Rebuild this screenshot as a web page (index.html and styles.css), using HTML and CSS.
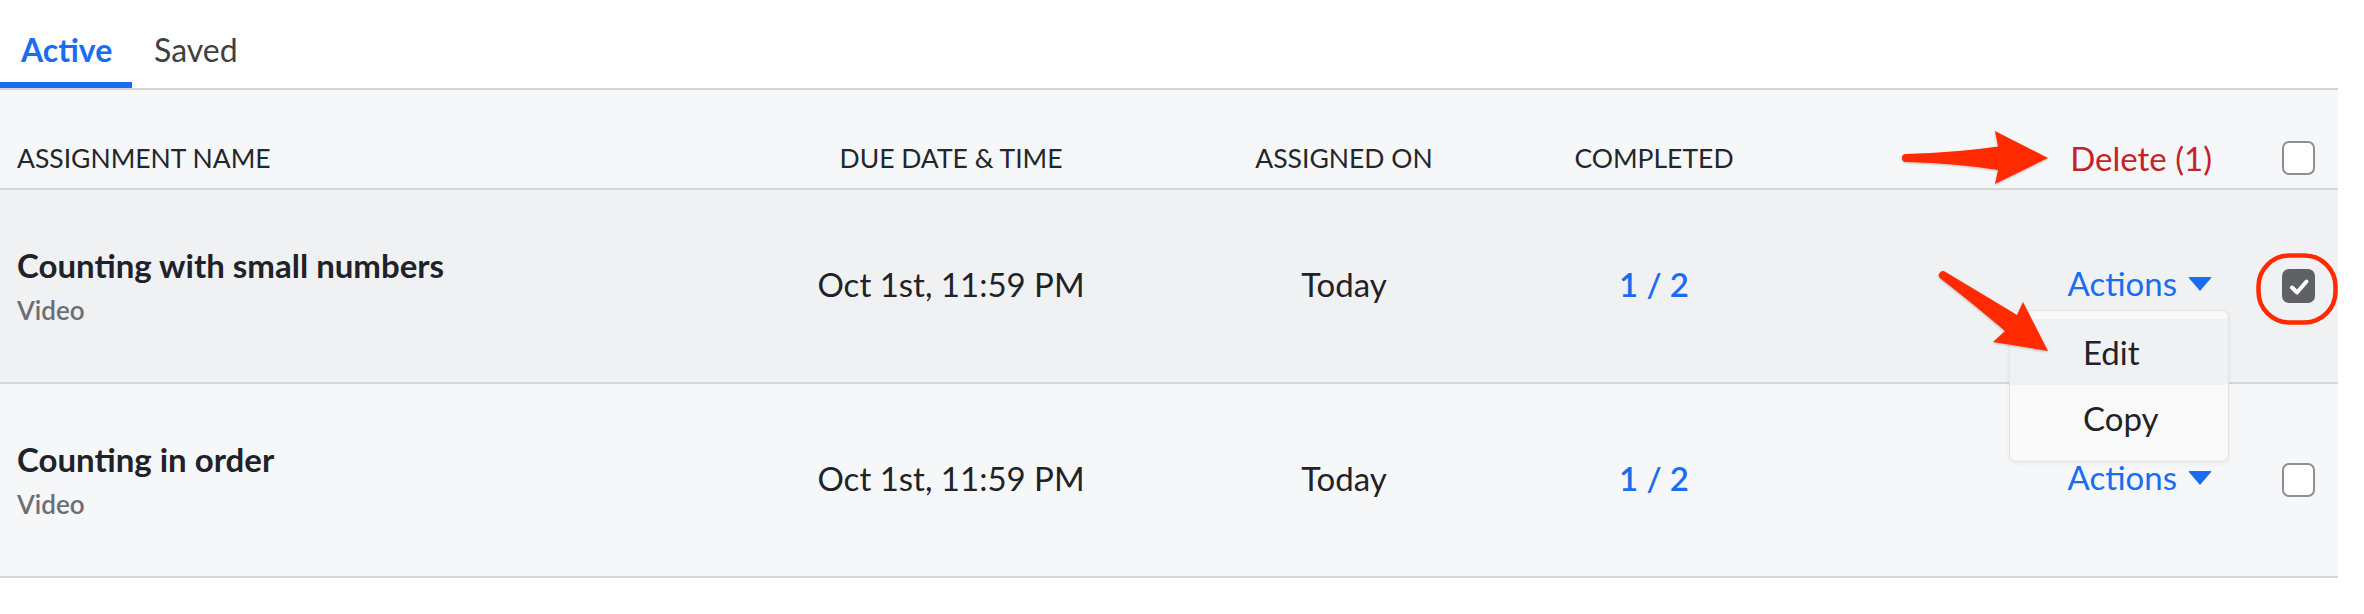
FILE: index.html
```html
<!DOCTYPE html>
<html lang="en">
<head>
<meta charset="utf-8">
<title>Assignments</title>
<link rel="stylesheet" href="styles.css">
</head>
<body>
<div class="page">
  <nav class="tabs">
    <a class="tab tab-active">Active</a>
    <a class="tab">Saved</a>
  </nav>

  <div class="table">
    <div class="row head">
      <div class="cell name">ASSIGNMENT NAME</div>
      <div class="cell mid">DUE DATE &amp; TIME</div>
      <div class="cell mid">ASSIGNED ON</div>
      <div class="cell mid">COMPLETED</div>
      <div class="cell act"><span class="delete">Delete (1)</span></div>
      <div class="cell chk"><span class="box"></span></div>
    </div>

    <div class="row item selected">
      <div class="cell name">
        <div class="title">Counting with small numbers</div>
        <div class="type">Video</div>
      </div>
      <div class="cell mid data">Oct 1st, 11:59 PM</div>
      <div class="cell mid data">Today</div>
      <div class="cell mid data done">1 / 2</div>
      <div class="cell act">
        <span class="actions">Actions <span class="caret"></span>
          <div class="menu">
            <div class="menu-item hover">Edit</div>
            <div class="menu-item">Copy</div>
          </div>
        </span>
      </div>
      <div class="cell chk"><span class="box checked"><svg viewBox="0 0 33 34" width="33" height="34"><path d="M10 18.5 L15 23.5 L24.5 12.5" fill="none" stroke="#fff" stroke-width="4" stroke-linecap="round" stroke-linejoin="round"/></svg></span></div>
    </div>

    <div class="row item">
      <div class="cell name">
        <div class="title">Counting in order</div>
        <div class="type">Video</div>
      </div>
      <div class="cell mid data">Oct 1st, 11:59 PM</div>
      <div class="cell mid data">Today</div>
      <div class="cell mid data done">1 / 2</div>
      <div class="cell act"><span class="actions">Actions <span class="caret"></span></span></div>
      <div class="cell chk"><span class="box"></span></div>
    </div>
  </div>
</div>

<svg class="annot" width="2364" height="614" viewBox="0 0 2364 614">
  <defs>
    <filter id="sh" x="-10%" y="-10%" width="120%" height="130%">
      <feDropShadow dx="0" dy="1" stdDeviation="1" flood-color="#000" flood-opacity="0.25"/>
    </filter>
  </defs>
  <path filter="url(#sh)" fill="#ff2a00" d="M1906,154 Q1958,152.5 1998,146.5 L1995,131 L2048,158 L1995,184 L1998,170 Q1958,163.5 1906,162 A4,4 0 0 1 1906,154 Z"/>
  <path filter="url(#sh)" fill="#ff2a00" d="M1945.5,272 Q1984,295 2017,315 L2023,302 L2048,351 L1993,342 L2005,331 Q1972,303 1940.5,278.5 A4,4 0 0 1 1945.5,272 Z"/>
  <rect x="2258.5" y="255.5" width="77" height="67" rx="31" ry="31" fill="none" stroke="#ff2a00" stroke-width="4.5"/>
</svg>
</body>
</html>
```
FILE: styles.css
```css
html, body {
  margin: 0;
  padding: 0;
  background: #ffffff;
}
body {
  position: relative;
  width: 2364px;
  height: 614px;
  overflow: hidden;
  font-family: Lato, "Open Sans", sans-serif;
  color: #1f2329;
}
.page {
  width: 2338px;
}
.tabs {
  display: flex;
  border-bottom: 2px solid #d6d7da;
  height: 88px;
  box-sizing: content-box;
}
.tab {
  display: block;
  box-sizing: border-box;
  height: 88px;
  padding: 31px 23px 0 22px;
  font-size: 32px;
  line-height: 38px;
  color: #3d3f42;
  border-bottom: 6px solid transparent;
}
.tab-active {
  padding-left: 21px;
  width: 132px;
  font-weight: 700;
  color: #1a6cf0;
  border-bottom-color: #1a6cf0;
}
.row {
  display: grid;
  grid-template-columns: 751px 400px 386px 234px 487px 80px;
  align-items: center;
  box-sizing: border-box;
  border-bottom: 2px solid #d6d7da;
}
.head {
  height: 100px;
  padding-top: 38px;
  background: #f6f7f9;
  font-size: 26.5px;
  line-height: 34px;
  color: #23262b;
}
.item {
  height: 194px;
  background: #f6f7f9;
}
.item.selected {
  background: #f0f1f3;
}
.cell.name {
  padding-left: 17px;
}
.item .cell.name {
  padding-bottom: 1px;
}
.cell.mid {
  text-align: center;
}
.cell.act {
  display: flex;
  justify-content: flex-end;
  padding-right: 46px;
}
.item .cell.act {
  padding-bottom: 6px;
}
.cell.chk {
  display: flex;
  justify-content: center;
}
.title {
  font-size: 33px;
  line-height: 38px;
  font-weight: 700;
  color: #1f2329;
}
.type {
  margin-top: 11px;
  font-size: 26px;
  line-height: 30px;
  font-weight: 600;
  color: #6b6e74;
}
.data {
  font-size: 33px;
  line-height: 38px;
  padding-bottom: 4px;
  color: #1f2329;
}
.data.done {
  color: #1a6cf0;
  font-weight: 600;
}
.delete {
  font-size: 33px;
  line-height: 38px;
  color: #c42129;
}
.actions {
  position: relative;
  display: inline-flex;
  align-items: center;
  font-size: 33px;
  line-height: 38px;
  color: #1a6cf0;
}
.caret {
  display: inline-block;
  width: 0;
  height: 0;
  margin-left: 11px;
  margin-top: 2px;
  border-left: 12px solid transparent;
  border-right: 12px solid transparent;
  border-top: 14px solid #1a6cf0;
  border-radius: 2px;
}
.box {
  display: block;
  width: 33px;
  height: 34px;
  box-sizing: border-box;
  border: 2px solid #8c8f94;
  border-radius: 7px;
  background: #ffffff;
}
.box.checked {
  border: none;
  background: #5f6166;
}
.box svg {
  display: block;
}
.menu {
  position: absolute;
  z-index: 5;
  top: calc(100% + 8px);
  right: -17px;
  width: 220px;
  box-sizing: border-box;
  padding: 8px 0 10px;
  background: #f9f9fa;
  border: 1.5px solid #e1e2e4;
  border-radius: 7px;
  box-shadow: 0 2px 5px rgba(0, 0, 0, 0.05);
}
.menu-item {
  height: 66px;
  line-height: 66px;
  padding-left: 73px;
  font-size: 33px;
  color: #1f2329;
}
.menu-item.hover {
  background: #f0f1f3;
}
.annot {
  position: absolute;
  top: 0;
  left: 0;
  z-index: 10;
  pointer-events: none;
}
```
